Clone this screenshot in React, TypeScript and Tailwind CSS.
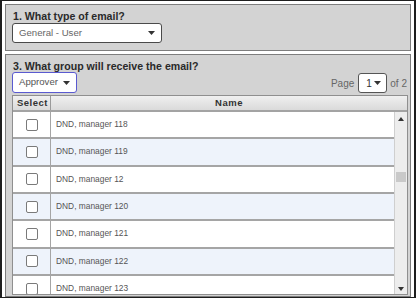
import React from 'react';

const rows = ['118', '119', '12', '120', '121', '122', '123'];

const Caret = () => (
  <svg width="7" height="4" viewBox="0 0 7 4" className="shrink-0">
    <path d="M0 0 L7 0 L3.5 4 Z" fill="#333" />
  </svg>
);

const Checkbox = () => (
  <div className="w-[12px] h-[12px] rounded-[2px] border-[1.5px] border-[#7a7a7a] bg-white" />
);

const Scrollbar = () => (
  <div className="w-[13px] shrink-0 bg-[#ededed] border-l border-[#cfcfcf] flex flex-col items-center">
    <svg width="6" height="4" viewBox="0 0 6 4" className="mt-[5px]">
      <path d="M0 4 L6 4 L3 0 Z" fill="#333" />
    </svg>
    <div className="mt-[51px] w-[10px] h-[10px] bg-[#c9c9c9]" />
    <div className="flex-1" />
    <svg width="6" height="4" viewBox="0 0 6 4" className="mb-[3px]">
      <path d="M0 0 L6 0 L3 4 Z" fill="#333" />
    </svg>
  </div>
);

export default function App() {
  return (
    <div className="w-[420px] h-[300px] bg-white font-['Liberation_Sans',Arial,sans-serif]">
      <div className="w-[416px] h-[298px] border-l-2 border-t border-r-2 border-b border-[#1e1e1e] px-[3px] pt-[3px] flex flex-col gap-[3px]">
        {/* Question 1 */}
        <div className="h-[47px] shrink-0 border border-[#7d7d7d] bg-[#d3d3d3] pl-[6px] pt-[5px]">
          <div className="text-[10.6px] leading-[13px] font-bold text-[#2a2a2a] pl-[1px]">1. What type of email?</div>
          <div className="w-[150px] h-[20px] bg-white border border-[#4a4a4a] rounded-[3px] flex items-center justify-between pl-[6px] pr-[6px]">
            <span className="text-[9.6px] text-[#666]">General - User</span>
            <Caret />
          </div>
        </div>

        {/* Question 3 */}
        <div className="flex-1 min-h-0 overflow-hidden border border-[#7d7d7d] bg-[#d3d3d3] pl-[6px] pr-[2px] pt-[5px]">
          <div className="text-[10.6px] leading-[12px] font-bold text-[#2a2a2a] pl-[1px]">3. What group will receive the email?</div>
          <div className="flex items-end justify-between pr-[1px]">
            <div className="w-[65px] h-[21px] bg-white border border-[#5a5ad0] rounded-[3px] flex items-center justify-between pl-[6px] pr-[6px]">
              <span className="text-[9.6px] text-[#555]">Approver</span>
              <Caret />
            </div>
            <div className="flex items-center text-[10px] text-[#666]">
              <span>Page</span>
              <div className="ml-[4px] w-[29px] h-[20px] bg-white border border-[#555] rounded-[3px] flex items-center justify-between pl-[7px] pr-[5px]">
                <span className="text-[#333]">1</span>
                <Caret />
              </div>
              <span className="ml-[3px]">of 2</span>
            </div>
          </div>

          {/* Table */}
          <div className="mt-[2px] border border-[#8f8f8f] bg-white h-[200px] flex flex-col">
            <div className="h-[16px] shrink-0 flex bg-gradient-to-b from-[#f0f0f0] to-[#dadada] border-b-2 border-[#a3a3a3] text-[9.5px] font-bold tracking-[0.5px] text-[#333] leading-[14px]">
              <div className="w-[38px] border-r border-[#9a9a9a] pl-[4px]">Select</div>
              <div className="flex-1 text-center">Name</div>
            </div>
            <div className="flex-1 min-h-0 flex">
              <div className="flex-1 min-w-0 overflow-hidden">
                {rows.map((n, i) => (
                  <div
                    key={n}
                    className={`h-[27.33px] shrink-0 flex border-b-2 border-[#a5a5a5] ${i % 2 === 1 ? 'bg-[#eef3fb]' : 'bg-white'}`}
                  >
                    <div className="w-[38px] border-r border-[#a5a5a5] flex items-center justify-center">
                      <Checkbox />
                    </div>
                    <div className="flex-1 pl-[5px] pt-[7px] text-[8.4px] leading-[10px] text-[#555]">DND, manager {n}</div>
                  </div>
                ))}
              </div>
              <Scrollbar />
            </div>
          </div>
        </div>
      </div>
    </div>
  );
}
